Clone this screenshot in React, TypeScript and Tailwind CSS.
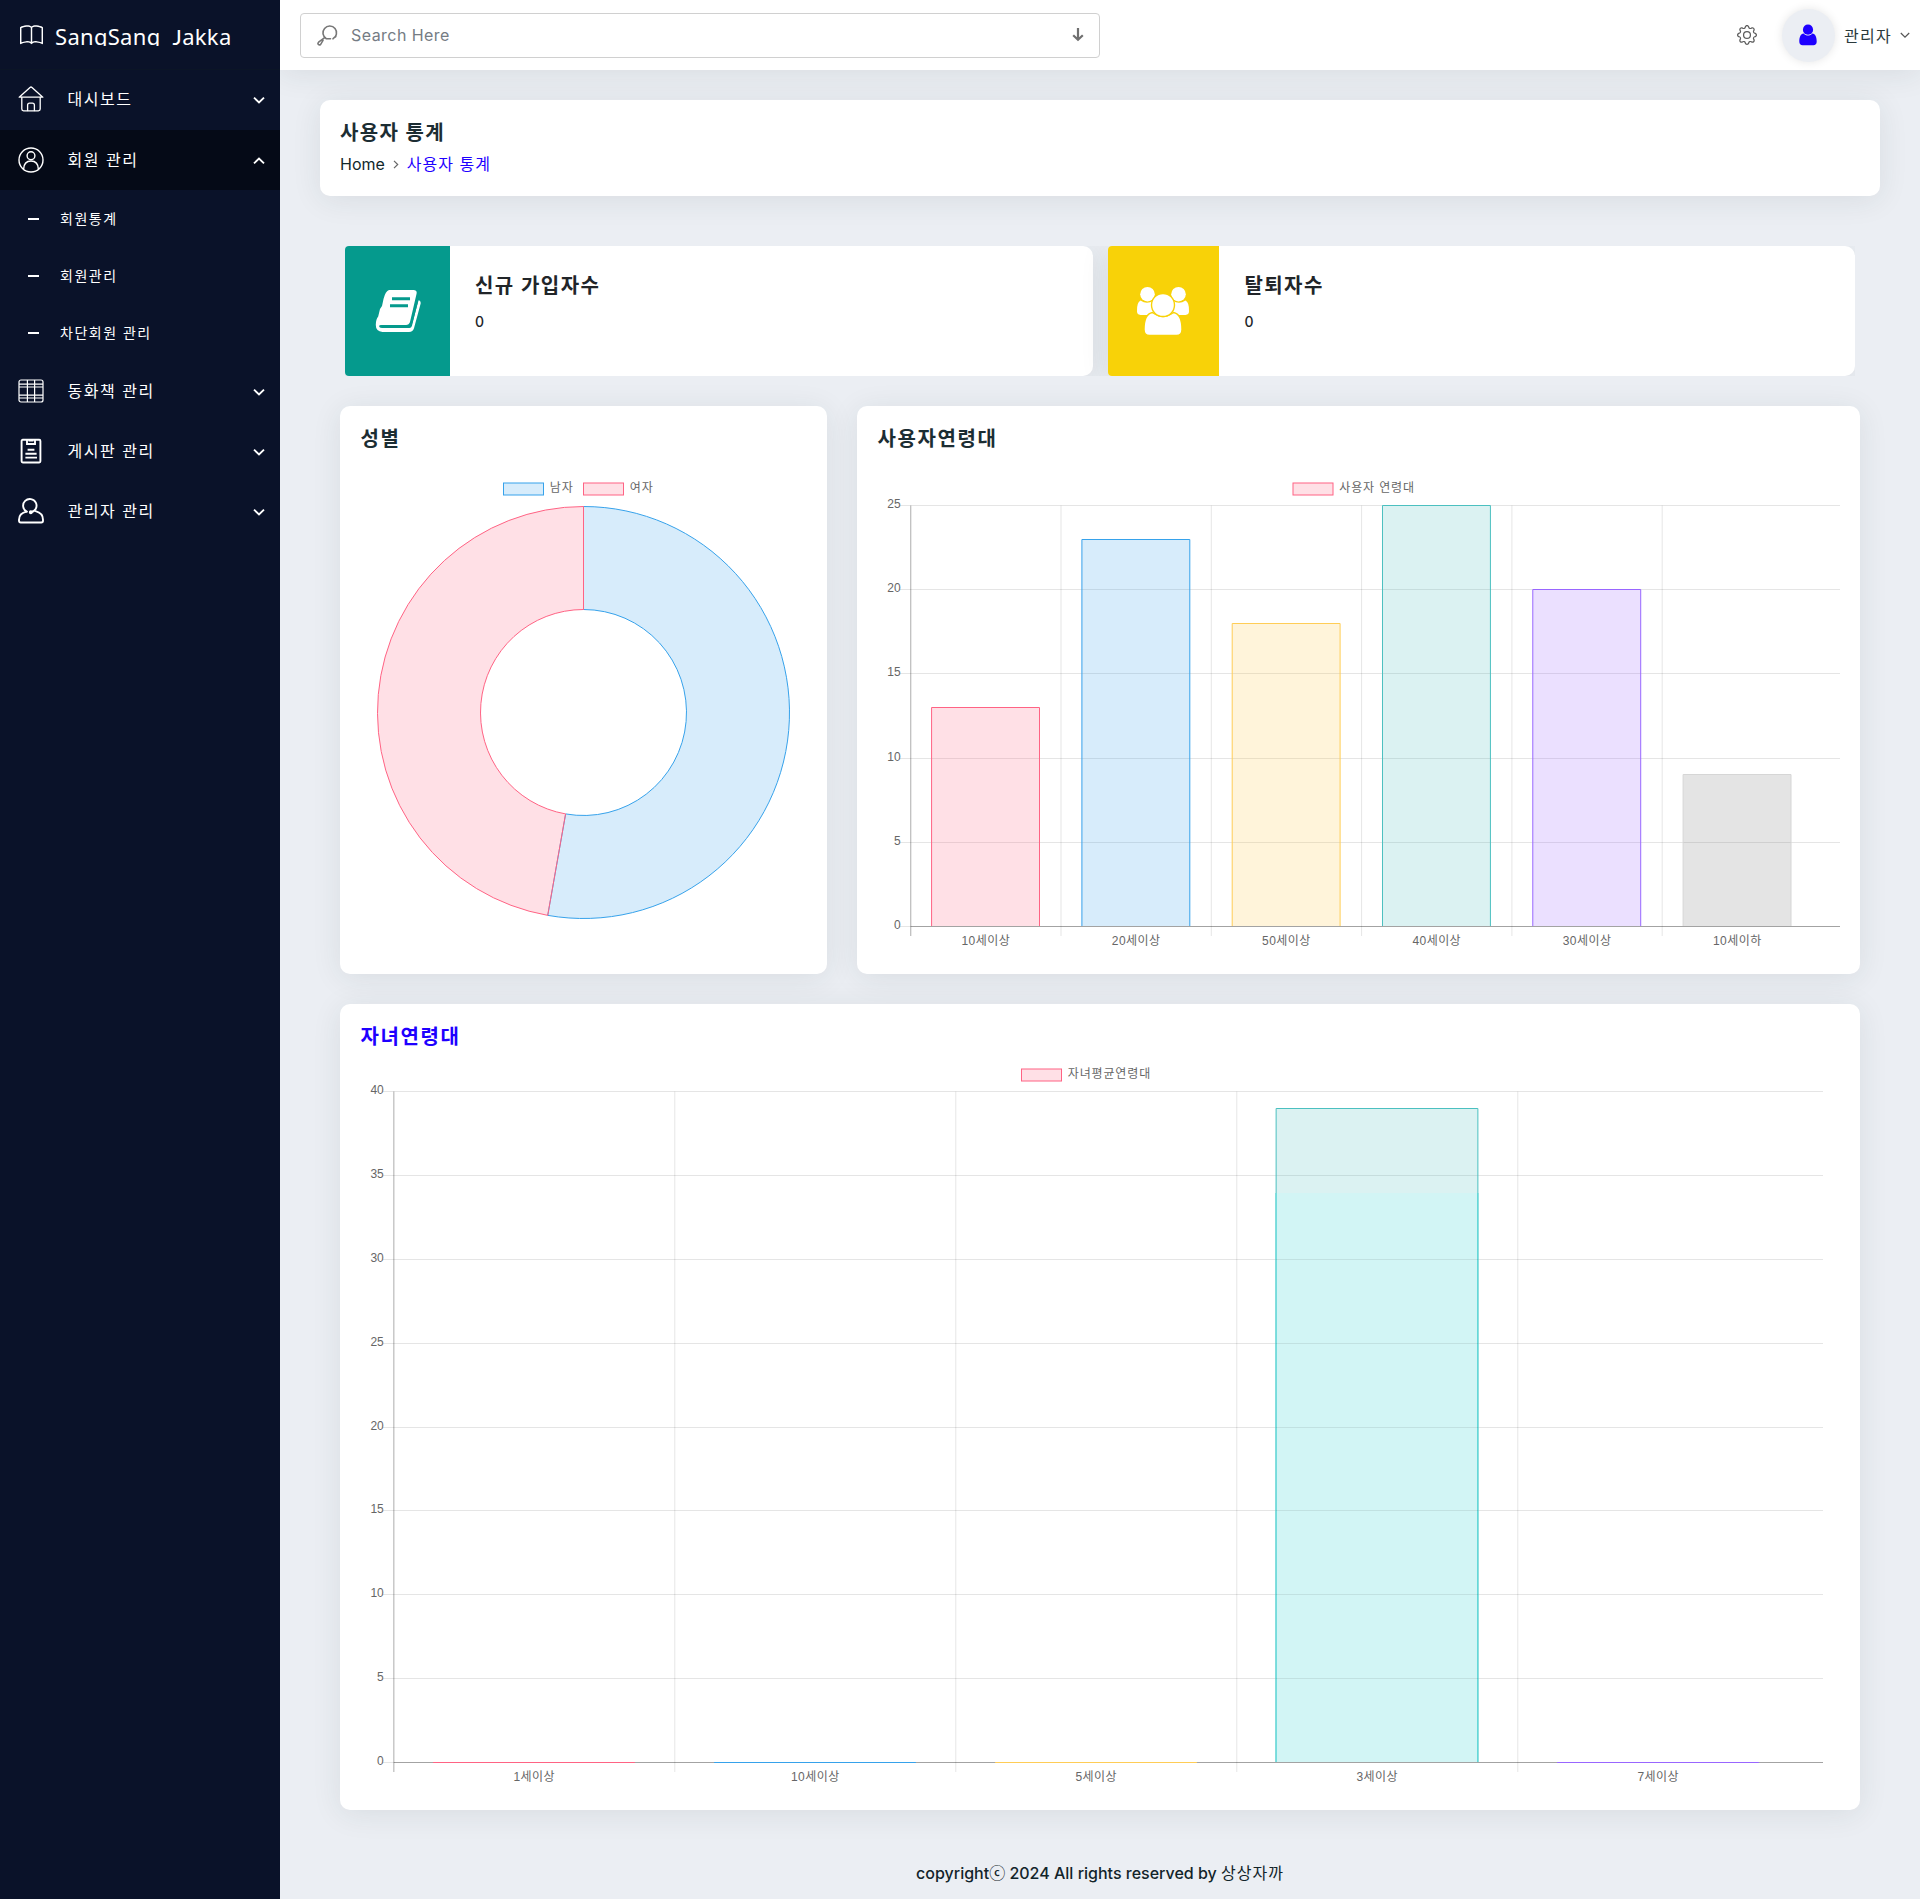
import type { ReactNode } from "react";
import { BsBook, BsGear } from "react-icons/bs";

const SHADOW = "shadow-[0_4px_30px_rgba(30,50,50,0.09)]";

const PINK = { fill: "rgba(255,99,132,0.2)", stroke: "rgb(255,99,132)" };
const BLUE = { fill: "rgba(54,162,235,0.2)", stroke: "rgb(54,162,235)" };
const YELLOW = { fill: "rgba(255,205,86,0.22)", stroke: "rgb(255,205,86)" };
const TEAL = { fill: "rgba(75,192,192,0.2)", stroke: "rgb(75,192,192)" };
const PURPLE = { fill: "rgba(153,102,255,0.2)", stroke: "rgb(153,102,255)" };
const GREY = { fill: "rgba(120,120,120,0.2)", stroke: "rgb(214,214,214)" };

type Tone = { fill: string; stroke: string };
type Bar = { label: string; value: number; tone: Tone };

function HomeIcon() {
  return (
    <svg width="26" height="26" viewBox="0 0 26 26" fill="none" stroke="#fff" strokeWidth="1.3" strokeLinejoin="round" strokeLinecap="round">
      <path d="M1.2 11.2 12 1.4q1-.9 2 0L24.8 11.2Z" />
      <path d="M3.8 11.4V23q0 1.8 1.8 1.8h14.8q1.8 0 1.8-1.8V11.4" />
      <path d="M9.6 24.6v-5.4q0-2 2-2h2.8q2 0 2 2v5.4" />
    </svg>
  );
}

function UserCircleIcon() {
  return (
    <svg width="26" height="26" viewBox="0 0 26 26" fill="none" stroke="#fff" strokeWidth="1.4">
      <circle cx="13" cy="13" r="12" />
      <circle cx="13" cy="8.7" r="3.9" />
      <path d="M5.6 22.2c.2-5.4 3-8.2 7.4-8.2s7.2 2.8 7.4 8.2" />
    </svg>
  );
}

function TableIcon() {
  return (
    <svg width="26" height="26" viewBox="0 0 26 26" fill="none" stroke="#fff" strokeWidth="1.2">
      <rect x="1" y="2" width="24" height="22" rx="2" />
      <path d="M9.4 2v22M16.6 2v22M1 6.2h24M1 9h24M1 17.2h24M1 20h24" />
    </svg>
  );
}

function ClipboardIcon() {
  return (
    <svg width="26" height="26" viewBox="0 0 26 26" fill="none" stroke="#fff" strokeWidth="1.9">
      <rect x="3.6" y="1.7" width="18.8" height="22.8" rx="1.2" />
      <path d="M9 2v4h8V2M10.5 2.6h5M9.6 11.8h6.8M7.4 15.7h11.2M7.4 19.6h11.6" />
    </svg>
  );
}

function AdminIcon() {
  return (
    <svg width="26" height="26" viewBox="0 0 26 26" fill="none" stroke="#fff" strokeWidth="1.9" strokeLinecap="round" strokeLinejoin="round">
      <path d="M8.7 13.6A6.7 6.7 0 1 1 12.8 14.3" />
      <path d="M17.6 13.2c5 1.3 7.4 3.8 7.4 8.6v1q0 1.7-1.7 1.7H2.7Q1 24.5 1 22.8v-1c0-4.8 2.7-7.3 7.7-8.2" />
      <circle cx="12.8" cy="14.2" r="1" fill="#fff" />
    </svg>
  );
}

function Chevron({ up = false }: { up?: boolean }) {
  return (
    <svg width="12" height="8" viewBox="0 0 12 8" fill="none" stroke="#fff" strokeWidth="1.9">
      <path d={up ? "M1 6.4 6 1.6l5 4.8" : "M1 1.6 6 6.4l5-4.8"} />
    </svg>
  );
}

function NavItem({ icon, label, active = false, className = "" }: { icon: ReactNode; label: string; active?: boolean; className?: string }) {
  return (
    <div className={`flex h-[60px] items-center pl-[18px] pr-[15px] ${active ? "bg-[#050a17]" : ""} ${className}`}>
      {icon}
      <span className="ml-[23.5px] flex-1 text-[16px] leading-6 tracking-[1.5px] text-white">{label}</span>
      <span className="mt-px">
        <Chevron up={active} />
      </span>
    </div>
  );
}

function SubItem({ label }: { label: string }) {
  return (
    <div className="flex h-[57px] items-center pl-7">
      <span className="h-[2px] w-[11px] bg-white" />
      <span className="ml-[21px] text-[14px] leading-5 tracking-[1.5px] text-white">{label}</span>
    </div>
  );
}

function Sidebar() {
  return (
    <aside className="w-[280px] shrink-0 bg-[#0a1229]">
      <div className="flex h-[70px] items-center border-b border-[#0b1526] pl-[20px]">
        <BsBook size={23} color="#fff" className="mt-[2px]" />
        <div className="-mt-[2px] ml-[12px] h-[24px] overflow-hidden whitespace-pre font-['Noto_Sans'] text-[22px] leading-[29px] tracking-[0.3px] text-white">
          {"SangSang  "}
          <span className="font-['Lato']">J</span>akka
        </div>
      </div>
      <NavItem icon={<HomeIcon />} label="대시보드" className="pb-[2px]" />
      <NavItem icon={<UserCircleIcon />} label="회원 관리" active />
      <SubItem label="회원통계" />
      <SubItem label="회원관리" />
      <SubItem label="차단회원 관리" />
      <NavItem icon={<TableIcon />} label="동화책 관리" />
      <NavItem icon={<ClipboardIcon />} label="게시판 관리" />
      <NavItem icon={<AdminIcon />} label="관리자 관리" />
    </aside>
  );
}

function Header() {
  return (
    <header className={`relative flex h-[70px] items-center bg-white pl-5 pr-[10px] ${SHADOW}`}>
      <div className="flex h-[45px] w-[800px] items-center rounded border border-[#d0d0d0] pl-4 pr-[14px]">
        <svg width="21" height="21" viewBox="0 0 21 21" fill="none" stroke="#777" strokeWidth="1.6" strokeLinecap="round">
          <path d="M9.3 13.7A6.8 6.8 0 1 1 16 13.8M19 10.8a6.8 6.8 0 0 1-.6 1.2M9.3 13.7h4.2" />
          <path d="M7.7 12.6 1.6 17.2q-1.2 1.3-.2 2.3t2.3-.2L6 15.4" />
        </svg>
        <span className="ml-[13px] flex-1 text-[16px] leading-6 tracking-[0.45px] text-[#757c84]">Search Here</span>
        <svg width="14" height="16" viewBox="0 0 14 16" fill="none" stroke="#6f6f6f" strokeWidth="2.2">
          <path d="M7 1v12M2.2 8.2 7 12.8l4.8-4.6" />
        </svg>
      </div>
      <div className="flex-1" />
      <BsGear size={20} color="#5c5c5c" />
      <div className="ml-[25px] flex size-[53px] items-center justify-center rounded-full bg-[#ebeef3] shadow-[0_0_10px_rgba(0,0,0,0.1)]">
        <svg width="18" height="22" viewBox="0 0 18 22" fill="#1e00ff">
          <circle cx="9" cy="5.7" r="5.1" />
          <path d="M4.6 9.5C6 11 7.4 11.6 9 11.6s3-.6 4.4-2.1c3 .5 4.3 3.5 4.3 8.2 0 2.3-1.3 3.5-3.3 3.5H3.6c-2 0-3.3-1.2-3.3-3.5 0-4.7 1.3-7.7 4.3-8.2Z" />
        </svg>
      </div>
      <span className="ml-[9px] mt-px text-[16px] leading-6 tracking-[1.3px] text-[#2b3a3c]">관리자</span>
      <svg className="ml-[8px]" width="10" height="7" viewBox="0 0 10 7" fill="none" stroke="#555" strokeWidth="1.2">
        <path d="M.8 1 5 5.2 9.2 1" />
      </svg>
    </header>
  );
}

function StatCard({ icon, tint, label, value, inset }: { icon: ReactNode; tint: string; label: string; value: string; inset: string }) {
  return (
    <div className={`flex h-[130px] flex-1 rounded-l rounded-r-[10px] bg-white ${SHADOW}`}>
      <div className={`flex shrink-0 items-center justify-center rounded-l ${tint}`}>{icon}</div>
      <div className={`pt-[25px] text-[#212529] ${inset}`}>
        <div className="text-[20px] font-semibold leading-[30px] tracking-[1.4px]">{label}</div>
        <div className="mt-[10px] text-[14px] font-medium leading-[22px]">{value}</div>
      </div>
    </div>
  );
}

function BookIcon() {
  return (
    <svg width="46" height="44" viewBox="0 0 46 44">
      <path d="M14 1h24.5q4 0 3 4L35 33q-1 3-4 3H6.5q-2 .2-2.2 1.3.2 1.6 2.7 1.6h27.5q1.8 0 2.4-2L43.4 11q2.8.8 2.2 3.8L39 39.3q-1 3.7-5 3.7H7.5Q.5 42.5.8 35.5 1 30 3.2 27.5L5 20l2-3 1.5-7Q10.5 2 14 1Z" fill="#fff" />
      <path d="M17 9.7h18M15 16.7h18" stroke="#059a8d" strokeWidth="3" />
      <path d="M4.5 37.2h27.5q3.4 0 4.4-3.5L43 9.5" stroke="#059a8d" strokeWidth="2" fill="none" />
    </svg>
  );
}

function PeopleIcon() {
  return (
    <svg width="54" height="50" viewBox="0 0 54 50" fill="#fff">
      <path d="M4.5 14.5Q11 19 17.5 14.5L24 20v9H4.5Q1 28.5 1 25.5 .6 16.5 4.5 14.5Z" />
      <path d="M49.5 14.5Q43 19 36.5 14.5L30 20v9h19.5q3.5-.5 3.5-3.5.4-9-3.5-11Z" />
      <circle cx="11.5" cy="8.2" r="7.3" />
      <circle cx="42.5" cy="8.2" r="7.3" />
      <path d="M16.5 26.5Q27 34.5 37.5 26.5 46 28 46 43.5q0 6-5.5 6h-27Q8 49.5 8 43.5 8 28 16.5 26.5Z" stroke="#f8d208" strokeWidth="1.4" />
      <circle cx="27" cy="19" r="11.5" stroke="#f8d208" strokeWidth="1.4" />
    </svg>
  );
}

function Legend({ x, y, tone, label, spacing = 0.85 }: { x: number; y: number; tone: Tone; label: string; spacing?: number }) {
  return (
    <g>
      <rect x={x} y={y} width="40" height="12" fill={tone.fill} stroke={tone.stroke} strokeWidth="1" />
      <text x={x + 46.3} y={y + 9} fontSize="12" fill="#666" letterSpacing={spacing}>
        {label}
      </text>
    </g>
  );
}

function Doughnut() {
  const cx = 583.5;
  const cy = 712.5;
  const R = 206;
  const r = 103;
  const angle = (19 / 36) * Math.PI * 2;
  const at = (rad: number, a: number) => `${cx + rad * Math.sin(a)} ${cy - rad * Math.cos(a)}`;
  return (
    <svg width="487" height="504" viewBox="340 470 487 504" className="font-['Liberation_Sans','Noto_Sans_CJK_KR',sans-serif]">
      <Legend x={503.5} y={483} tone={BLUE} label="남자" />
      <Legend x={583.5} y={483} tone={PINK} label="여자" />
      <path
        d={`M${at(R, 0)}A${R} ${R} 0 1 1 ${at(R, angle)}L${at(r, angle)}A${r} ${r} 0 1 0 ${at(r, 0)}Z`}
        fill={BLUE.fill}
        stroke={BLUE.stroke}
      />
      <path
        d={`M${at(R, angle)}A${R} ${R} 0 0 1 ${at(R, 0)}L${at(r, 0)}A${r} ${r} 0 0 0 ${at(r, angle)}Z`}
        fill={PINK.fill}
        stroke={PINK.stroke}
      />
    </svg>
  );
}

type ChartProps = {
  view: [number, number, number, number];
  left: number;
  right: number;
  top: number;
  bottom: number;
  step: number;
  max: number;
  bars: Bar[];
  legend: ReactNode;
  children?: ReactNode;
};

function BarChart({ view, left, right, top, bottom, step, max, bars, legend, children }: ChartProps) {
  const snap = (v: number) => Math.floor(v) + 0.5;
  const yOf = (v: number) => snap(bottom - (v / max) * (bottom - top));
  const ticks = Array.from({ length: max / 5 + 1 }, (_, i) => i * 5);
  const width = step * 0.718;
  return (
    <svg width={view[2]} height={view[3]} viewBox={view.join(" ")} className="font-['Liberation_Sans','Noto_Sans_CJK_KR',sans-serif]">
      {legend}
      {bars.map((_, i) => (
        <line key={i} x1={left + step * i} x2={left + step * i} y1={top} y2={bottom + 9.5} stroke={i === 0 ? "rgba(0,0,0,0.25)" : "rgba(0,0,0,0.1)"} strokeWidth={i === 0 ? 1.3 : 1} />
      ))}
      {ticks.map((t) => (
        <g key={t}>
          <line x1={left - 11} x2={t === 0 ? left : right} y1={yOf(t)} y2={yOf(t)} stroke="rgba(0,0,0,0.1)" />
          {t === 0 && <line x1={left} x2={right} y1={yOf(0)} y2={yOf(0)} stroke="rgba(0,0,0,0.36)" />}
          <text x={left - 10} y={yOf(t) + 2.8} fontSize="12" fill="#666" textAnchor="end">
            {t}
          </text>
        </g>
      ))}
      {bars.map((b, i) => {
        const x = left + step * i + (step - width) / 2 - 0.3;
        const y = yOf(b.value);
        return (
          <g key={b.label}>
            {b.value > 0 && <rect x={x} y={y} width={width} height={bottom - 0.5 - y} fill={b.tone.fill} />}
            <path d={b.value > 0 ? `M${x} ${bottom - 0.5}V${y}H${x + width}V${bottom - 0.5}` : `M${x} ${y}H${x + width}`} fill="none" stroke={b.tone.stroke} />
            <text x={left + step * (i + 0.5)} y={bottom + 18.5} fontSize="12" fill="#666" textAnchor="middle" letterSpacing="0.45">
              {b.label}
            </text>
          </g>
        );
      })}
      {children}
    </svg>
  );
}

const AGE_BARS: Bar[] = [
  { label: "10세이상", value: 13, tone: PINK },
  { label: "20세이상", value: 23, tone: BLUE },
  { label: "50세이상", value: 18, tone: YELLOW },
  { label: "40세이상", value: 25, tone: TEAL },
  { label: "30세이상", value: 20, tone: PURPLE },
  { label: "10세이하", value: 9, tone: GREY },
];

const CHILD_BARS: Bar[] = [
  { label: "1세이상", value: 0, tone: PINK },
  { label: "10세이상", value: 0, tone: BLUE },
  { label: "5세이상", value: 0, tone: YELLOW },
  { label: "3세이상", value: 39, tone: TEAL },
  { label: "7세이상", value: 0, tone: PURPLE },
];

function Panel({ title, size, titleTone = "text-[#1c2d33]", gap, children }: { title: string; size: string; titleTone?: string; gap: string; children: ReactNode }) {
  return (
    <section className={`overflow-hidden rounded-[10px] bg-white ${SHADOW} ${size}`}>
      <h2 className={`pl-[20.5px] pt-[18px] text-[20px] font-semibold leading-[30px] tracking-[1.6px] ${titleTone} ${gap}`}>{title}</h2>
      {children}
    </section>
  );
}

export default function App() {
  return (
    <div className="flex h-[1899px] w-[1920px] overflow-hidden bg-[#ebeef3] font-['Inter','Noto_Sans_CJK_KR',sans-serif]">
      <Sidebar />
      <div className="flex min-w-0 flex-1 flex-col overflow-hidden">
        <Header />
        <main className="px-10 pt-[30px]">
          <section className={`h-[96px] rounded-[10px] bg-white pl-5 pt-[18px] ${SHADOW}`}>
            <h1 className="text-[20px] font-semibold leading-[30px] tracking-[1.3px] text-[#1c2d33]">사용자 통계</h1>
            <div className="mt-[4px] flex items-center text-[16px] leading-6 text-[#12282c]">
              <span>Home</span>
              <svg className="mx-2" width="6" height="9" viewBox="0 0 6 9" fill="none" stroke="#666" strokeWidth="1.2">
                <path d="m1 .8 3.7 3.7L1 8.2" />
              </svg>
              <span className="tracking-[1px] text-[#1e00ff]">사용자 통계</span>
            </div>
          </section>

          <div className="mx-[25px] mt-[50px] flex gap-[15px] overflow-hidden">
            <StatCard icon={<div className="flex w-[105px] justify-center"><BookIcon /></div>} tint="bg-[#059a8d]" label="신규 가입자수" value="0" inset="pl-[25px]" />
            <StatCard icon={<div className="flex w-[111px] justify-center"><PeopleIcon /></div>} tint="bg-[#f8d208]" label="탈퇴자수" value="0" inset="pl-[26px]" />
          </div>

          <div className="mx-5 mt-[30px] flex gap-[30px]">
            <Panel title="성별" size="h-[568px] w-[487px]" gap="mb-[16px]">
              <Doughnut />
            </Panel>
            <Panel title="사용자연령대" size="h-[568px] w-[1003px]" gap="mb-[16px]">
              <BarChart
                view={[857, 470, 1003, 504]}
                left={910.7}
                right={1840}
                top={505.5}
                bottom={926.5}
                step={150.3}
                max={25}
                bars={AGE_BARS}
                legend={<Legend x={1293} y={483} tone={PINK} label="사용자 연령대" />}
              />
            </Panel>
          </div>

          <div className="mx-5 mt-[30px]">
            <Panel title="자녀연령대" size="h-[806px] w-[1520px]" titleTone="text-[#1e00ff]" gap="mb-[8px]">
              <BarChart
                view={[340, 1060, 1520, 750]}
                left={393.8}
                right={1823}
                top={1091.5}
                bottom={1762.5}
                step={281}
                max={40}
                bars={CHILD_BARS}
                legend={<Legend x={1021.5} y={1069} tone={PINK} label="자녀평균연령대" />}
              >
                <rect x="1276" y="1193" width="202" height="569" fill="#d2f5f5" />
                <path d="M1276.1 1193V1762M1477.8 1193V1762" stroke="#35cdcd" />
                {Array.from({ length: 6 }, (_, i) => (
                  <line key={i} x1="1276" x2="1478" y1={Math.floor(1762.5 - (i + 1) * 83.875) + 0.5} y2={Math.floor(1762.5 - (i + 1) * 83.875) + 0.5} stroke="rgba(0,0,0,0.08)" />
                ))}
              </BarChart>
            </Panel>
          </div>
        </main>
        <footer className="mt-[51px] text-center text-[16px] font-medium leading-6 text-[#12242a]">
          copyrightⓒ 2024 All rights reserved by <span className="font-normal tracking-[1px]">상상자까</span>
        </footer>
      </div>
    </div>
  );
}
